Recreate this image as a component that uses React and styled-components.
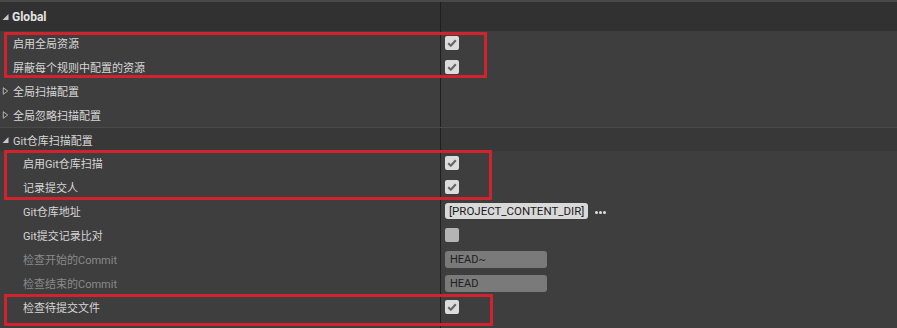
import React from 'react';
import styled, { createGlobalStyle } from 'styled-components';

const GlobalStyle = createGlobalStyle`
    html, body {
        margin: 0;
        padding: 0;
        background: #3e3e3e;
    }
    body {
        font-family: Roboto, "Noto Sans CJK SC", "Noto Sans", sans-serif;
    }
`;

const rows = [
    { type: 'header', label: 'Global' },
    { label: '启用全局资源', indent: 13, value: 'check' },
    { label: '屏蔽每个规则中配置的资源', indent: 13, value: 'check' },
    { label: '全局扫描配置', indent: 13, arrow: 'closed' },
    { label: '全局忽略扫描配置', indent: 13, arrow: 'closed' },
    { type: 'sub', label: 'Git仓库扫描配置', indent: 13, arrow: 'open' },
    { label: '启用Git仓库扫描', indent: 23, value: 'check' },
    { label: '记录提交人', indent: 23, value: 'check' },
    { label: 'Git仓库地址', indent: 23, value: 'path' },
    { label: 'Git提交记录比对', indent: 23, value: 'empty' },
    { label: '检查开始的Commit', indent: 23, value: 'text', text: 'HEAD~', disabled: true },
    { label: '检查结束的Commit', indent: 23, value: 'text', text: 'HEAD', disabled: true },
    { label: '检查待提交文件', indent: 23, value: 'check' },
];

const boxes = [
    { top: 32, left: 4, width: 483, height: 46 },
    { top: 150, left: 4, width: 488, height: 50 },
    { top: 294, left: 4, width: 489, height: 32 },
];

const Arrow = ({ kind }) => {
    if (kind === 'open') {
        return (
            <ArrowIcon viewBox="0 0 7 7">
                <path d="M6.5 0.5 L6.5 6.5 L0.5 6.5 Z" fill="#c8c8c8" />
            </ArrowIcon>
        );
    }
    return (
        <ArrowIcon viewBox="0 0 7 9">
            <path d="M1 0.8 L6 4.5 L1 8.2 Z" fill="none" stroke="#bdbdbd" strokeWidth="1" />
        </ArrowIcon>
    );
};

const Check = ({ checked }) => (
    <CheckBox checked={checked}>
        {checked && (
            <svg width="10" height="10" viewBox="0 0 10 10">
                <path d="M1.2 5.3 L3.8 7.8 L8.8 2.2" fill="none" stroke="#666" strokeWidth="2.1" strokeLinejoin="round" />
            </svg>
        )}
    </CheckBox>
);

const Value = ({ row }) => {
    if (row.value === 'check') return <Check checked />;
    if (row.value === 'empty') return <Check />;
    if (row.value === 'path') {
        return (
            <>
                <PathField>[PROJECT_CONTENT_DIR]</PathField>
                <Dots>
                    <Dot />
                    <Dot />
                    <Dot />
                </Dots>
            </>
        );
    }
    if (row.value === 'text') return <TextField>{row.text}</TextField>;
    return null;
};

export default function App() {
    return (
        <>
            <GlobalStyle />
            <Panel>
                <TopStrip />
                {rows.map((row, id) => {
                    if (row.type === 'header') {
                        return (
                            <HeaderRow key={id}>
                                <HeaderName>
                                    <Arrow kind="open" />
                                    <HeaderLabel>{row.label}</HeaderLabel>
                                </HeaderName>
                                <ValueCell />
                            </HeaderRow>
                        );
                    }
                    return (
                        <Row key={id} sub={row.type === 'sub'}>
                            <NameCell>
                                {row.arrow && <Arrow kind={row.arrow} />}
                                <Label indent={row.indent} disabled={row.disabled}>{row.label}</Label>
                            </NameCell>
                            <ValueCell>
                                <Value row={row} />
                            </ValueCell>
                        </Row>
                    );
                })}
                <Filler>
                    <NameCell />
                    <ValueCell />
                </Filler>
                {boxes.map((b, id) => (
                    <RedBox key={id} style={{ top: b.top, left: b.left, width: b.width, height: b.height }} />
                ))}
            </Panel>
        </>
    );
}

const Panel = styled.div`
    position: relative;
    width: 897px;
    height: 328px;
    overflow: hidden;
    background-color: #3e3e3e;
    display: flex;
    flex-direction: column;
`;

const TopStrip = styled.div`
    height: 2px;
    flex: none;
    background-color: #484848;
`;

const HeaderRow = styled.div`
    display: grid;
    grid-template-columns: 441px 1fr;
    height: 29px;
    flex: none;
    background-color: #313131;
`;

const HeaderName = styled.div`
    position: relative;
    display: flex;
    align-items: center;
    border-right: 1px solid #1f1f1f;
`;

const HeaderLabel = styled.span`
    padding-left: 12px;
    font-size: 12px;
    font-weight: 700;
    color: #e4e4e4;
`;

const Row = styled.div`
    display: grid;
    grid-template-columns: 441px 1fr;
    height: 24px;
    flex: none;
    background-color: ${(p) => (p.sub ? '#383838' : '#3e3e3e')};
    border-top: ${(p) => (p.sub ? '1px solid #4a4a4a' : 'none')};
    box-sizing: border-box;
`;

const Filler = styled.div`
    display: grid;
    grid-template-columns: 441px 1fr;
    flex: 1;
`;

const NameCell = styled.div`
    position: relative;
    display: flex;
    align-items: center;
    border-right: 1px solid #1f1f1f;
    min-width: 0;
`;

const ArrowIcon = styled.svg`
    position: absolute;
    left: 2px;
    top: 50%;
    width: 7px;
    height: 8px;
    transform: translateY(-50%);
`;

const Label = styled.span`
    padding-left: ${(p) => p.indent}px;
    font-size: 11px;
    color: ${(p) => (p.disabled ? '#8a8a8a' : '#d6d6d6')};
    white-space: nowrap;
`;

const ValueCell = styled.div`
    display: flex;
    align-items: center;
    padding-left: 4px;
    gap: 7px;
`;

const CheckBox = styled.div`
    width: 14px;
    height: 14px;
    border-radius: 2px;
    background-color: ${(p) => (p.checked ? '#dcdcdc' : '#b4b4b4')};
    display: flex;
    align-items: center;
    justify-content: center;
`;

const PathField = styled.div`
    height: 16px;
    line-height: 16px;
    padding: 0 4px;
    border-radius: 3px;
    background-color: #d9d9d9;
    color: #1c1c1c;
    font-family: Roboto, "Liberation Sans", sans-serif;
    font-size: 11.5px;
`;

const Dots = styled.div`
    display: flex;
    gap: 1px;
    margin-top: 3px;
`;

const Dot = styled.span`
    width: 3px;
    height: 3px;
    border-radius: 50%;
    background-color: #e0e0e0;
`;

const TextField = styled.div`
    width: 97px;
    height: 17px;
    line-height: 17px;
    padding-left: 5px;
    border-radius: 3px;
    background-color: #7a7a7a;
    color: #202020;
    font-family: Roboto, "Liberation Sans", sans-serif;
    font-size: 11px;
`;

const RedBox = styled.div`
    position: absolute;
    box-sizing: border-box;
    border: 3px solid #d0232d;
    pointer-events: none;
`;
